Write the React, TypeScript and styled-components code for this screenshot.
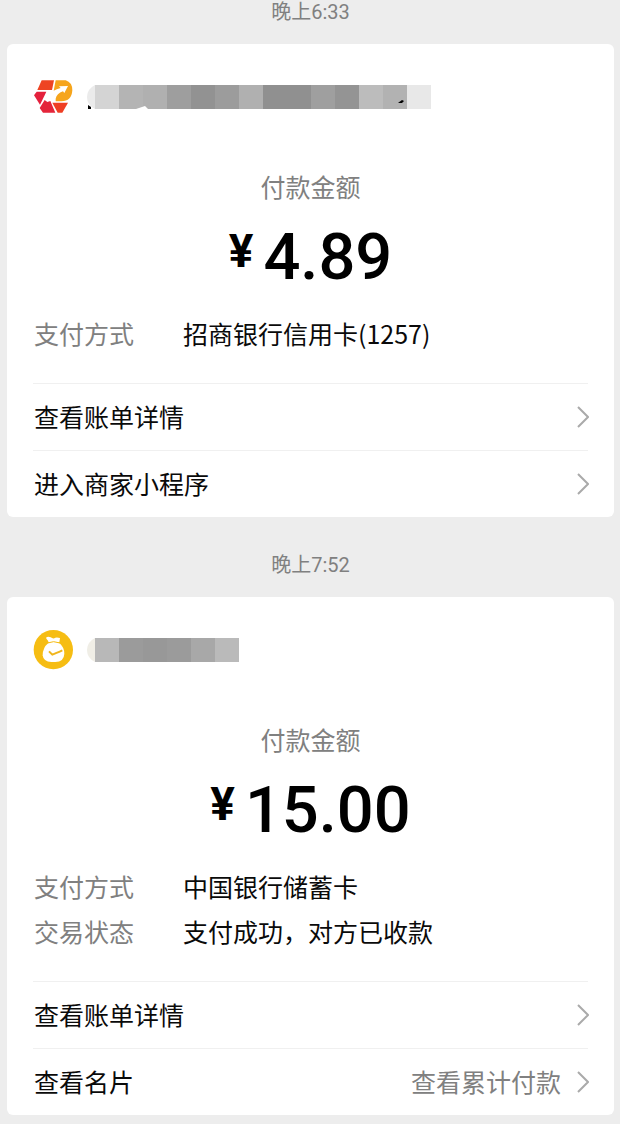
import React from "react";
import styled, { createGlobalStyle } from "styled-components";

const GlobalStyle = createGlobalStyle`
  *, *::before, *::after { box-sizing: border-box; }
  body {
    margin: 0;
    background: #ededed;
    color: #0a0a0a;
    font-family: "Noto Sans CJK SC", sans-serif;
    font-size: 25px;
  }
`;

const Feed = styled.main`
  padding: 0 6px 9px 7px;
`;

const Stamp = styled.time`
  display: block;
  padding: 36px 0 20px;
  font-family: Roboto, "Noto Sans CJK SC", sans-serif;
  font-size: 20px;
  line-height: 24px;
  text-align: center;
  color: #808080;

  &:first-child { padding-top: 0; }
`;

const Card = styled.article`
  padding: 33px 26px 0;
  border-radius: 6px;
  background: #fff;
`;

const Merchant = styled.header`
  display: flex;
  align-items: center;
  height: 40px;
`;

const Logo = styled.svg`
  width: 40px;
  height: 40px;
  flex: none;
`;

const MaskedName = styled.svg`
  height: 24px;
  flex: none;
  margin-left: 10px;
`;

const Caption = styled.p`
  margin: 52px 0 14px;
  line-height: 34px;
  text-align: center;
  color: #808080;
`;

const Amount = styled.p`
  display: flex;
  justify-content: center;
  gap: 10px;
  margin: 0;
  height: 80px;
  font-family: Roboto, sans-serif;
  font-weight: 500;
  font-size: 65px;
  line-height: 80px;
  color: #000;
`;

const Currency = styled.span`
  font-size: 46px;
  line-height: 68px;
  font-weight: 700;
`;

const Details = styled.dl`
  margin: 14px 0 27px;
  padding-left: 1px;
`;

const Detail = styled.div`
  display: grid;
  grid-template-columns: 149px 1fr;
  line-height: 45px;

  dt { color: #808080; }
  dd { margin: 0; }
`;

const ActionRow = styled.a`
  display: flex;
  align-items: center;
  height: 67px;
  border-top: 1px solid #f0f0f0;
  color: inherit;
  text-decoration: none;
`;

const Label = styled.span`
  padding: 0 0 2px 1px;
`;

const Note = styled(Label)`
  margin-left: auto;
  color: #808080;
`;

const Chevron = styled.svg`
  width: 12px;
  height: 22px;
  margin: 0 -1px 0 16px;
  flex: none;

  &:nth-child(2) { margin-left: auto; }
`;

function RecycleLogo() {
  return (
    <Logo viewBox="99 51 120 120" aria-hidden="true">
      <path d="M125 61H162L156 90H112Z" fill="#ee4423" />
      <path d="M110 95H139L133 108L120 134L102 106Z" fill="#e4213d" />
      <path d="M134 120L142 126L151 123L166 158H129L119 144Z" fill="#e4253a" />
      <path d="M157 128H204L187 158H173Z" fill="#ef3e23" />
      <path d="M167 61H197Q217 67 217 91Q215 124 184 124H167V116Q170 101 189 94L193 99L204 78L177 79L182 84Q169 87 161 92Z" fill="#f6a51c" />
    </Logo>
  );
}

function MoneyBagLogo() {
  return (
    <Logo viewBox="99 60 120 120" aria-hidden="true">
      <circle cx="160" cy="119" r="59" fill="#f6bd13" />
      <path d="M139 82Q144 78 152 82Q160 88 166 83Q173 82 180 84L178 97H146L143 91Q137 87 139 82Z" fill="#fff" />
      <path d="M145 99Q160 92 178 99Q193 112 193 131Q192 155 166 156H154Q130 155 128 136Q128 113 145 99Z" fill="#fff" />
      <path d="M143 99Q160 91 180 99" fill="none" stroke="#f6bd13" strokeWidth="3" />
      <path d="M147 124L157 134Q167 130 187 121" fill="none" stroke="#f0b51c" strokeWidth="6" />
    </Logo>
  );
}

interface MaskProps {
  shades: string[];
  edge: string;
  children?: React.ReactNode;
}

function Mask({ shades, edge, children }: MaskProps) {
  const width = 12 + shades.length * 24;
  return (
    <MaskedName width={width} viewBox={`0 0 ${width} 24`} role="img" aria-label="商家名称已隐藏">
      <path d="M12 0Q4 4 4 12T12 24Z" fill={edge} />
      {shades.map((shade, i) => (
        <rect key={i} x={12 + i * 24} width="24" height="24" fill={shade} shapeRendering="crispEdges" />
      ))}
      {children}
    </MaskedName>
  );
}

function Action({ label, note }: { label: string; note?: string }) {
  return (
    <ActionRow href="#">
      <Label>{label}</Label>
      {note && <Note>{note}</Note>}
      <Chevron viewBox="0 0 12 22" aria-hidden="true">
        <path d="M1 1L11 11L1 21" fill="none" stroke="#aaa" strokeWidth="2" />
      </Chevron>
    </ActionRow>
  );
}

interface PaymentProps {
  merchant: React.ReactNode;
  amount: string;
  details: [string, string][];
  children: React.ReactNode;
}

function Payment({ merchant, amount, details, children }: PaymentProps) {
  return (
    <Card>
      <Merchant>{merchant}</Merchant>
      <Caption>付款金额</Caption>
      <Amount>
        <Currency>¥</Currency>
        <span>{amount}</span>
      </Amount>
      <Details>
        {details.map(([term, value]) => (
          <Detail key={term}>
            <dt>{term}</dt>
            <dd>{value}</dd>
          </Detail>
        ))}
      </Details>
      {children}
    </Card>
  );
}

const longMask = [
  "#d4d4d4", "#b4b4b4", "#b0b0b0", "#9e9e9e", "#929292", "#9c9c9c", "#b0b0b0",
  "#909090", "#909090", "#9f9f9f", "#949494", "#bcbcbc", "#b2b2b2", "#e8e8e8",
];
const shortMask = ["#b8b8b8", "#9b9b9b", "#989898", "#9b9b9b", "#a8a8a8", "#bababa"];

export default function App() {
  return (
    <>
      <GlobalStyle />
      <Feed>
        <Stamp>晚上6:33</Stamp>
        <Payment
          merchant={
            <>
              <RecycleLogo />
              <Mask shades={longMask} edge="#ebebeb">
                <path d="M5 20L8 22V24H5Z" fill="#000" />
                <path d="M53 24L62 21L65 24Z" fill="#fff" />
                <path d="M315 18L319 15L321 16L319 18Z" fill="#000" />
              </Mask>
            </>
          }
          amount="4.89"
          details={[["支付方式", "招商银行信用卡(1257)"]]}
        >
          <Action label="查看账单详情" />
          <Action label="进入商家小程序" />
        </Payment>
        <Stamp>晚上7:52</Stamp>
        <Payment
          merchant={
            <>
              <MoneyBagLogo />
              <Mask shades={shortMask} edge="#f0eee6" />
            </>
          }
          amount="15.00"
          details={[
            ["支付方式", "中国银行储蓄卡"],
            ["交易状态", "支付成功，对方已收款"],
          ]}
        >
          <Action label="查看账单详情" />
          <Action label="查看名片" note="查看累计付款" />
        </Payment>
      </Feed>
    </>
  );
}
